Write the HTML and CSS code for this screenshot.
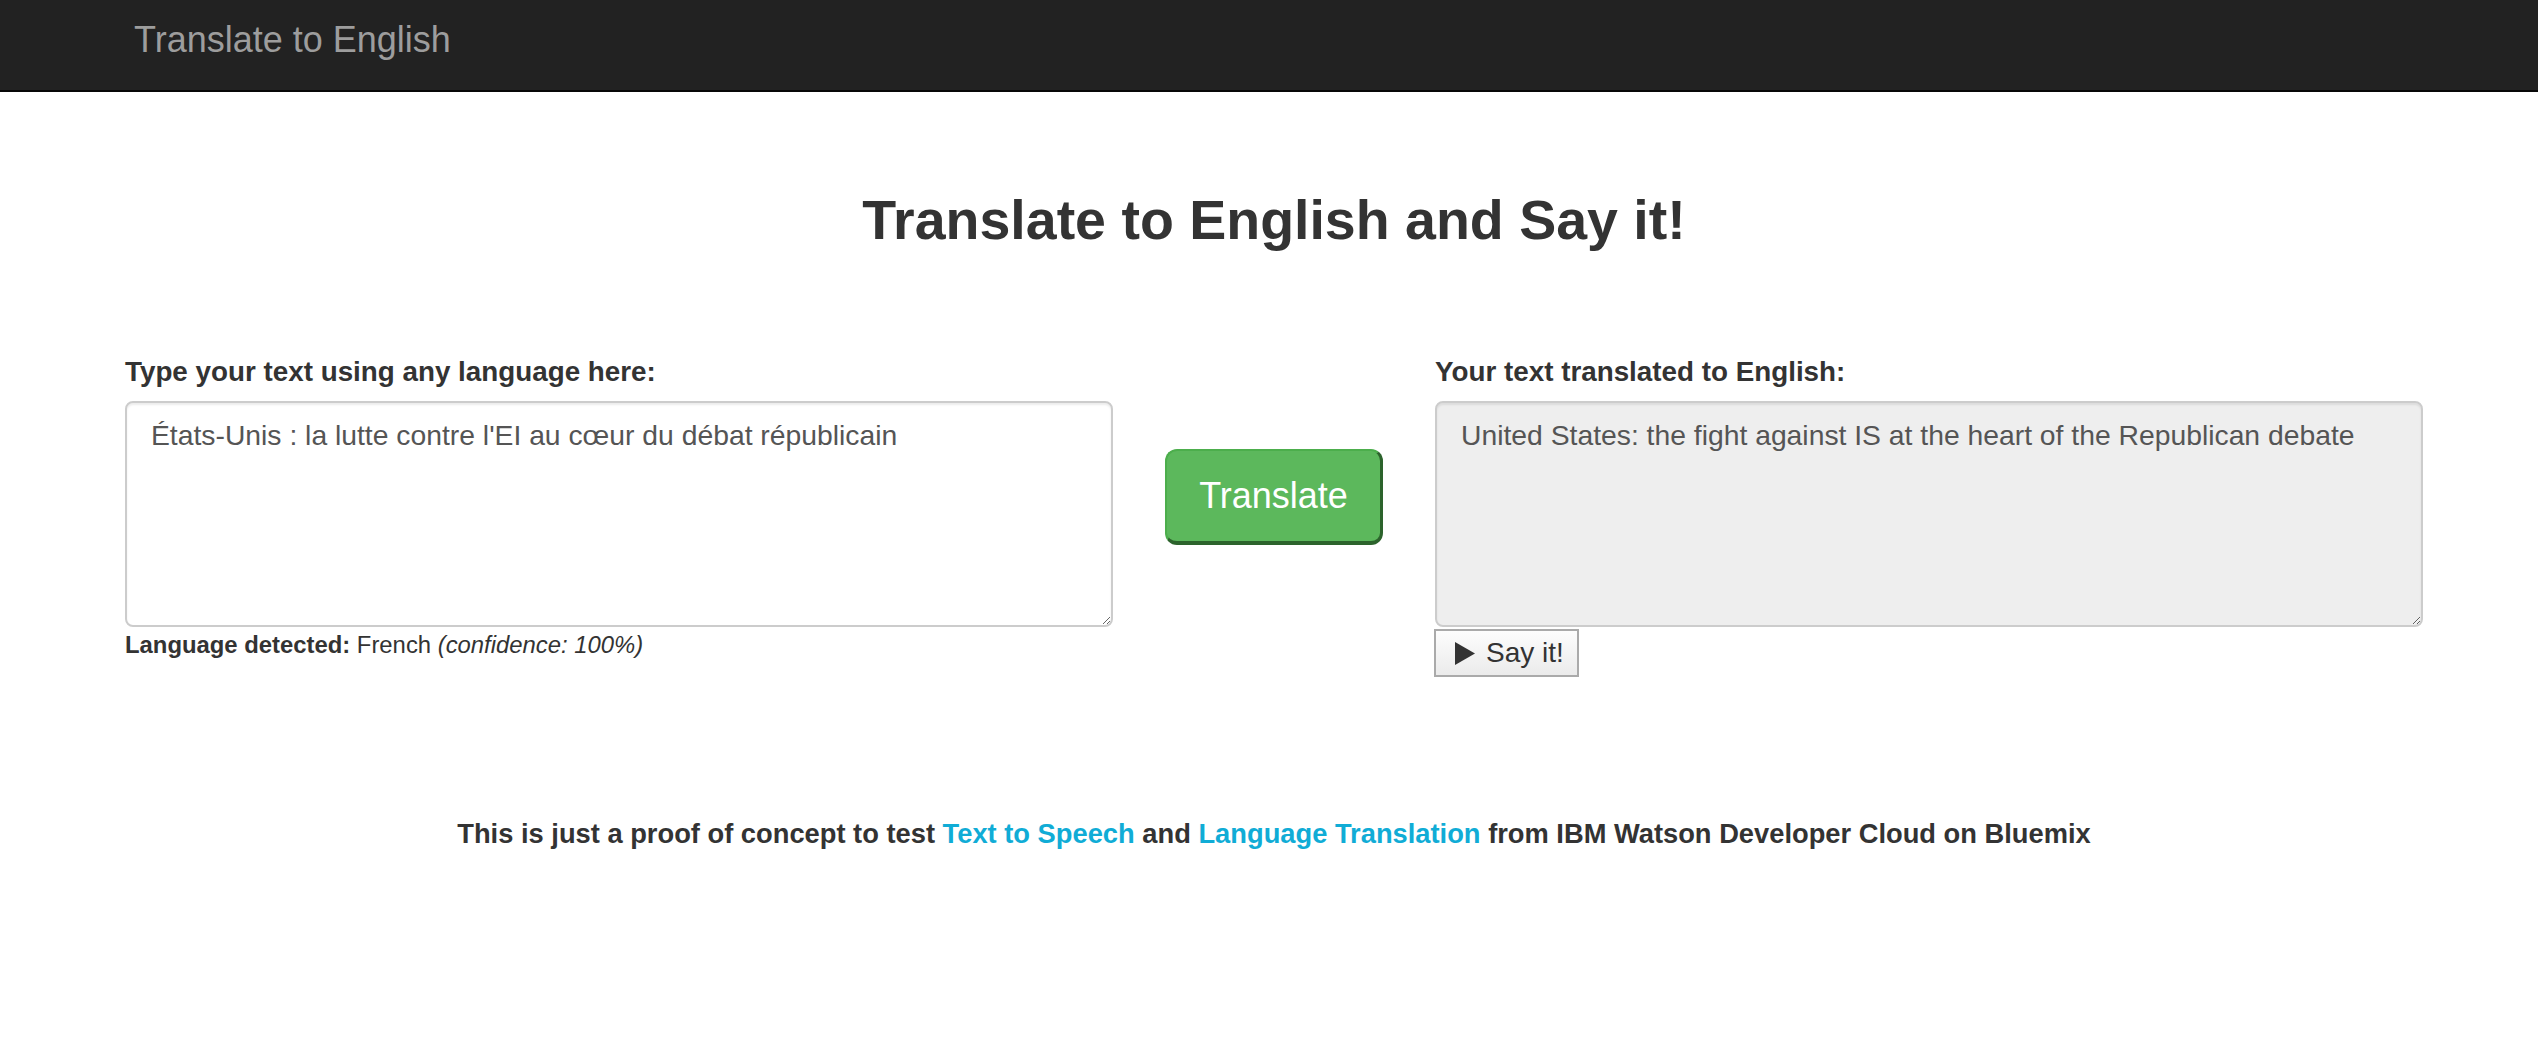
FILE: index.html
```html
<!DOCTYPE html>
<html lang="en">
<head>
<meta charset="utf-8">
<title>Translate to English</title>
<link rel="stylesheet" href="styles.css">
</head>
<body>
<nav class="navbar">
  <a class="brand" href="#">Translate to English</a>
</nav>
<main class="page">
  <h1 class="title">Translate to English and Say it!</h1>
  <div class="row">
    <div class="col">
      <label class="label" for="src">Type your text using any language here:</label>
      <textarea id="src" class="field">États-Unis : la lutte contre l'EI au cœur du débat républicain</textarea>
      <div class="detected"><b>Language detected:</b> French <i>(confidence: 100%)</i></div>
    </div>
    <div class="mid">
      <button class="translate" type="button">Translate</button>
    </div>
    <div class="col">
      <label class="label" for="dst">Your text translated to English:</label>
      <textarea id="dst" class="field readonly" readonly>United States: the fight against IS at the heart of the Republican debate</textarea>
      <button class="say" type="button"><svg class="play" width="20" height="23" viewBox="0 0 20 23"><path d="M0 0 L20 11.5 L0 23 Z" fill="#333"/></svg><span>Say it!</span></button>
    </div>
  </div>
  <p class="footer">This is just a proof of concept to test <a href="#">Text to Speech</a> and <a href="#">Language Translation</a> from IBM Watson Developer Cloud on Bluemix</p>
</main>
</body>
</html>
```
FILE: styles.css
```css
* { box-sizing: border-box; }
html, body { margin: 0; padding: 0; background: #fff; }
body {
  font-family: "Liberation Sans", Arial, Helvetica, sans-serif;
  color: #333;
}
.navbar {
  height: 92px;
  background: #222;
  border-bottom: 2px solid #080808;
  padding: 20px 0 0 134px;
}
.brand {
  display: inline-block;
  font-size: 36px;
  line-height: 40px;
  color: #9d9d9d;
  text-decoration: none;
}
.page {
  padding: 0 115px 0 125px;
}
.title {
  margin: 98px 0 0;
  font-size: 55.5px;
  line-height: 61px;
  font-weight: bold;
  text-align: center;
  color: #333;
}
.row {
  display: grid;
  grid-template-columns: 988px 1fr 988px;
  margin-top: 101px;
}
.col { display: flex; flex-direction: column; align-items: flex-start; }
.label {
  display: block;
  font-size: 27.8px;
  line-height: 40px;
  font-weight: bold;
  margin-bottom: 9px;
}
.field {
  display: block;
  width: 100%;
  height: 226px;
  margin: 0;
  padding: 12px 24px;
  font-family: "Liberation Sans", Arial, Helvetica, sans-serif;
  font-size: 28.3px;
  line-height: 40px;
  color: #555;
  background: #fff;
  border: 2px solid #ccc;
  border-radius: 8px;
  box-shadow: inset 0 2px 2px rgba(0,0,0,.075);
  outline: none;
}
.field.readonly { background: #eee; }
.detected {
  font-size: 23.85px;
  line-height: 34px;
  margin-top: 1px;
}
.mid {
  display: flex;
  justify-content: center;
  align-items: flex-start;
  padding-top: 97px;
}
.translate {
  height: 96px;
  padding: 0 32px;
  font-family: "Liberation Sans", Arial, Helvetica, sans-serif;
  font-size: 36px;
  line-height: 90px;
  color: #fff;
  background: #5cb85c;
  border-style: solid;
  border-color: #4cae4c #2c632c #2c632c #4cae4c;
  border-width: 2px 3px 4px 2px;
  border-radius: 12px;
}
.say {
  display: flex;
  align-items: center;
  width: 145px;
  height: 48px;
  margin-top: 2px;
  margin-left: -1px;
  padding: 0 0 0 19px;
  font-family: "Liberation Sans", Arial, Helvetica, sans-serif;
  font-size: 28px;
  line-height: 44px;
  color: #333;
  background: linear-gradient(#fdfdfd, #ebebeb);
  border: 2px solid #aaa;
  border-radius: 0;
}
.play { margin-right: 11px; flex: none; }
.footer {
  margin: 137px 0 0;
  font-size: 27.3px;
  line-height: 40px;
  font-weight: bold;
  text-align: center;
}
.footer a { color: #10acd6; text-decoration: none; }
```
